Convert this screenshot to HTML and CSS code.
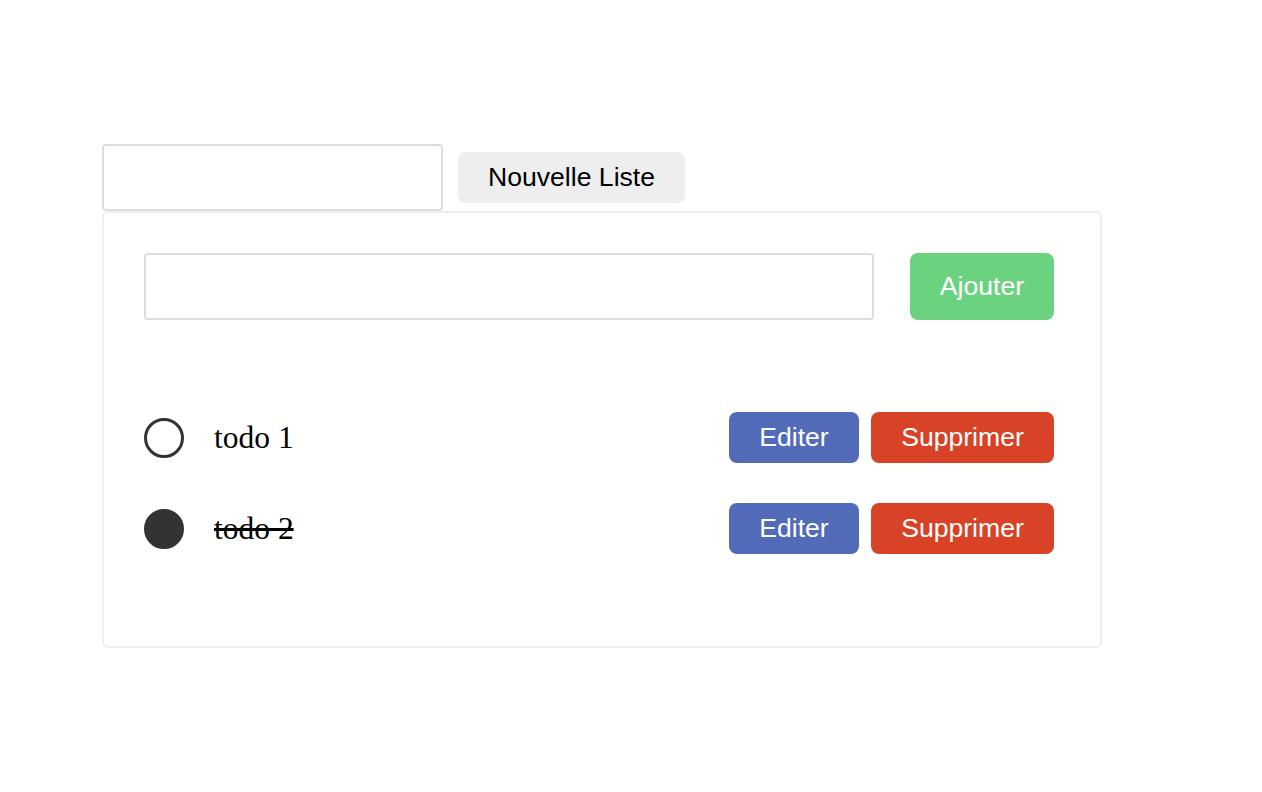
FILE: index.html
```html
<!DOCTYPE html>
<html lang="fr">
<head>
<meta charset="utf-8">
<title>Todo</title>
<link rel="stylesheet" href="styles.css">
</head>
<body>
<div class="app">
  <div class="top-row">
    <input class="list-input" type="text">
    <button class="btn btn-new">Nouvelle Liste</button>
  </div>
  <div class="panel">
    <div class="add-row">
      <input class="todo-input" type="text">
      <button class="btn btn-add">Ajouter</button>
    </div>
    <ul class="todos">
      <li class="todo">
        <span class="check"></span>
        <span class="label">todo 1</span>
        <span class="actions">
          <button class="btn btn-edit">Editer</button>
          <button class="btn btn-del">Supprimer</button>
        </span>
      </li>
      <li class="todo done">
        <span class="check"></span>
        <span class="label">todo 2</span>
        <span class="actions">
          <button class="btn btn-edit">Editer</button>
          <button class="btn btn-del">Supprimer</button>
        </span>
      </li>
    </ul>
  </div>
</div>
</body>
</html>
```

FILE: styles.css
```css
* { box-sizing: border-box; }
html, body { margin: 0; padding: 0; background: #fff; }
body { font-family: "Liberation Serif", "Times New Roman", serif; }

.app {
  padding: 144px 0 0 102px;
  width: 1102px;
}

.top-row {
  display: flex;
  align-items: center;
  gap: 15px;
}

.list-input {
  width: 341px;
  height: 67px;
  border: 2px solid #ddd;
  border-radius: 4px;
  background: #fff;
  outline: none;
  margin: 0;
}

.btn {
  font-family: "Liberation Sans", Arial, sans-serif;
  font-size: 26.6px;
  border: none;
  border-radius: 8px;
  cursor: pointer;
  margin: 0;
  padding: 0;
  line-height: 1;
}

.btn-new {
  width: 227px;
  height: 51px;
  background: #eeeeee;
  color: #000;
}

.panel {
  width: 1000px;
  height: 437px;
  border: 2px solid #eee;
  border-radius: 6px;
  padding: 40px 46px 40px 40px;
}

.add-row {
  display: flex;
  gap: 36px;
}

.todo-input {
  width: 730px;
  height: 67px;
  border: 2px solid #ddd;
  border-radius: 4px;
  outline: none;
  margin: 0;
}

.btn-add {
  width: 144px;
  height: 67px;
  background: #6bd37f;
  color: #fff;
}

.todos {
  list-style: none;
  margin: 92px 0 0 0;
  padding: 0;
  display: flex;
  flex-direction: column;
  gap: 40px;
}

.todo {
  display: flex;
  align-items: center;
  height: 51px;
}

.check {
  width: 40px;
  height: 40px;
  border: 3px solid #333;
  border-radius: 50%;
  flex: none;
}

.done .check { background: #333; }

.label {
  margin-left: 30px;
  font-size: 31.5px;
  color: #000;
  flex: 1;
}

.done .label { text-decoration: line-through; }

.actions {
  display: flex;
  gap: 12px;
}

.btn-edit {
  width: 130px;
  height: 51px;
  background: #526bb9;
  color: #fff;
}

.btn-del {
  width: 183px;
  height: 51px;
  background: #d84226;
  color: #fff;
}
```
